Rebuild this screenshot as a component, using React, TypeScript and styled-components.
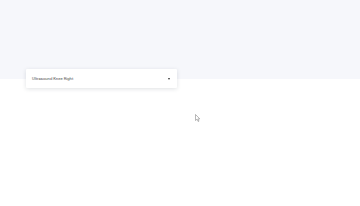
import React from 'react';
import styled, { createGlobalStyle } from 'styled-components';

const GlobalStyle = createGlobalStyle`
  html, body {
    margin: 0;
    padding: 0;
    background: #ffffff;
    font-family: Roboto, "Liberation Sans", Arial, sans-serif;
  }
`;

const Page = styled.div`
  position: relative;
  width: 360px;
  height: 206px;
  overflow: hidden;
  background: #ffffff;
`;

const Header = styled.div`
  height: 79px;
  background: #f6f7fb;
`;

const Body = styled.div`
  padding-left: 26px;
  margin-top: -10px;
`;

const Select = styled.div`
  width: 151px;
  height: 19px;
  box-sizing: border-box;
  padding: 0 6px;
  display: flex;
  align-items: center;
  justify-content: space-between;
  background: #ffffff;
  border-radius: 1px;
  box-shadow: 0 1px 4px rgba(30, 40, 60, 0.14);
`;

const Label = styled.span`
  font-family: Roboto, "Liberation Sans", Arial, sans-serif;
  font-size: 4.2px;
  color: #555555;
  letter-spacing: 0;
`;

const Caret = styled.span`
  width: 0;
  height: 0;
  margin-right: 1px;
  border-left: 1.5px solid transparent;
  border-right: 1.5px solid transparent;
  border-top: 2px solid #333;
`;

const Cursor = styled.svg`
  position: absolute;
  left: 195px;
  top: 114px;
`;

export default function App() {
  return (
    <>
      <GlobalStyle />
      <Page>
        <Header />
        <Body>
          <Select>
            <Label>Ultrasound Knee Right</Label>
            <Caret />
          </Select>
        </Body>
        <Cursor width="6" height="8" viewBox="0 0 6 8">
          <path d="M0.5 0.5 L0.5 6.5 L2 5.2 L3.2 7.5 L4 7.1 L2.9 4.9 L4.8 4.9 Z" fill="#fff" stroke="#888" strokeWidth="0.6" />
        </Cursor>
      </Page>
    </>
  );
}
